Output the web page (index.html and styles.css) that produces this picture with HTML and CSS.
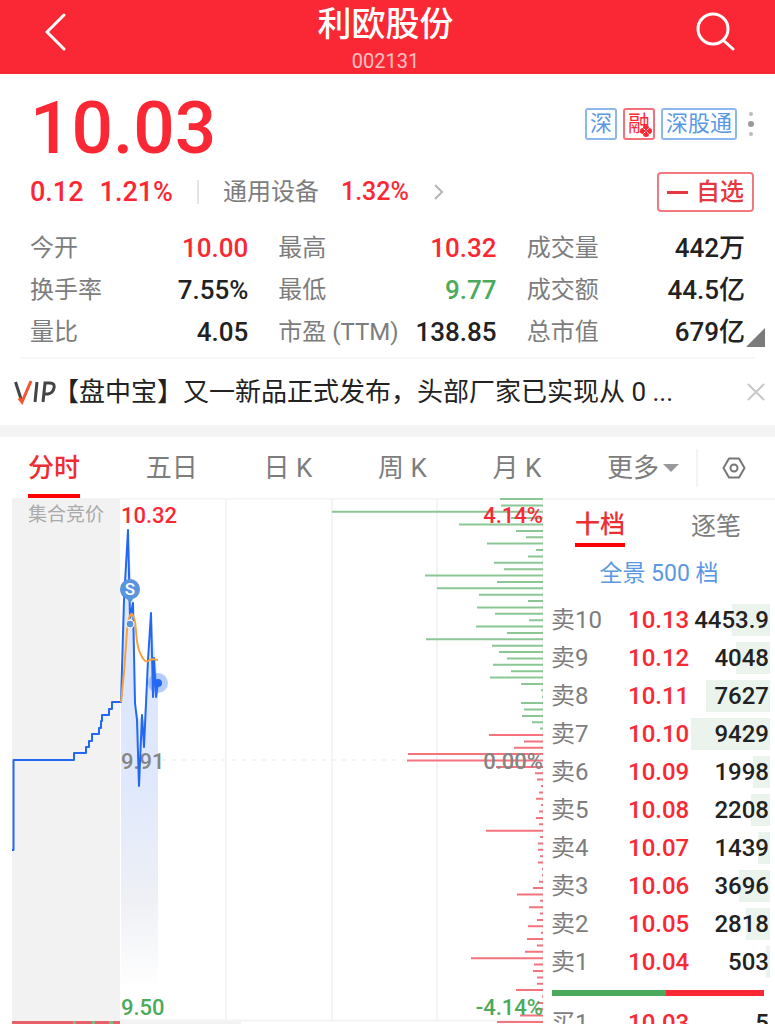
FILE: index.html
```
<!DOCTYPE html>
<html lang="zh-CN">
<head>
    <meta charset="UTF-8">
    <meta name="viewport" content="width=device-width, initial-scale=1.0">
    <title>利欧股份 002131</title>
    <link rel="stylesheet" href="styles.css">
</head>
<body>
    <div class="page">
        <header class="topbar">
            <button class="icon-btn" aria-label="返回">
                <svg width="24" height="40" viewBox="0 0 24 40"><path d="M20 3L3 20l17 17" fill="none" stroke="#fff" stroke-width="3" stroke-linecap="round" stroke-linejoin="round"/></svg>
            </button>
            <div class="title">
                <h1>利欧股份</h1>
                <p>002131</p>
            </div>
            <button class="icon-btn" aria-label="搜索">
                <svg width="40" height="40" viewBox="0 0 40 40"><g fill="none" stroke="#fff" stroke-width="3" stroke-linecap="round"><circle cx="18" cy="17" r="15"/><path d="M28.500 28.500L38 37"/></g></svg>
            </button>
        </header>

        <section class="quote">
            <div class="price-row">
                <strong class="price">10.03</strong>
                <div class="tags">
                    <span class="tag">深</span>
                    <span class="tag tag-red">融
                        <svg class="tag-badge" width="12" height="12" viewBox="0 0 12 12"><g fill="#fa2835"><circle cx="6" cy="3" r="3"/><circle cx="3" cy="6" r="3"/><circle cx="9" cy="6" r="3"/><circle cx="6" cy="9" r="3"/></g><path d="M3.500 3.500l5 5M8.500 3.500l-5 5" stroke="#fff"/><circle cx="6" cy="6" r="1" fill="#fa2835"/></svg>
                    </span>
                    <span class="tag">深股通</span>
                    <button class="more-dots" aria-label="更多标签"><svg width="8" height="26" viewBox="0 0 8 26"><circle cx="4" cy="3" r="2" fill="#bbb"/><circle cx="4" cy="13" r="3" fill="#999"/><circle cx="4" cy="23" r="2" fill="#bbb"/></svg></button>
                </div>
            </div>
            <div class="change-row">
                <span class="up">0.12</span>
                <span class="up">1.21%</span>
                <i class="sep"></i>
                <a href="#" class="sector">通用设备 <b class="up">1.32%</b>
                    <svg width="12" height="18" viewBox="0 0 12 18"><path d="M2 2l7 7-7 7" fill="none" stroke="#b5b5b5" stroke-width="2"/></svg>
                </a>
                <button class="watch"><i></i>自选</button>
            </div>
            <dl class="stats">
                <div><dt>今开</dt><dd class="up">10.00</dd></div>
                <div><dt>最高</dt><dd class="up">10.32</dd></div>
                <div><dt>成交量</dt><dd>442万</dd></div>
                <div><dt>换手率</dt><dd>7.55%</dd></div>
                <div><dt>最低</dt><dd class="down">9.77</dd></div>
                <div><dt>成交额</dt><dd>44.5亿</dd></div>
                <div><dt>量比</dt><dd>4.05</dd></div>
                <div><dt>市盈 (TTM)</dt><dd>138.85</dd></div>
                <div><dt>总市值</dt><dd>679亿</dd></div>
            </dl>
            <i class="corner"></i>
        </section>

        <div class="notice">
            <svg width="42" height="26" viewBox="0 0 42 26" role="img" aria-label="VIP"><g fill="none" stroke-width="3"><path d="M1.500 3l5.500 17" stroke="#444"/><path d="M17 2L8 23l-3-4" stroke="#f4552e"/><path d="M23 3l-2 20M29 23l2-19h5q5 0 4 5t-6 6h-4" stroke="#444"/></g></svg>
            <a href="#">【盘中宝】又一新品正式发布，头部厂家已实现从 0 ...</a>
            <button aria-label="关闭"><svg width="18" height="18" viewBox="0 0 18 18"><path d="M1 1l16 16M17 1L1 17" stroke="#c8c8c8" stroke-width="2"/></svg></button>
        </div>

        <nav class="tabs">
            <div class="tab-list">
                <button class="active">分时</button>
                <button>五日</button>
                <button>日 K</button>
                <button>周 K</button>
                <button>月 K</button>
                <button>更多<i class="caret"></i></button>
            </div>
            <button class="settings" aria-label="图表设置">
                <svg width="24" height="22" viewBox="0 0 24 22"><g fill="none" stroke="#777" stroke-width="2" stroke-linejoin="round"><path d="M7 1.500h10L22.500 11 17 20.500H7L1.500 11z"/><circle cx="12" cy="11" r="3.500"/></g></svg>
            </button>
        </nav>

        <main class="board">
            <svg class="chart" viewBox="0 0 531 526">
                <defs>
                    <linearGradient id="fade" x1="0" y1="0" x2="0" y2="1">
                        <stop offset="0" stop-color="#dbe6fd"/>
                        <stop offset=".55" stop-color="#dfe8fc"/>
                        <stop offset=".8" stop-color="#eef0f5"/>
                        <stop offset="1" stop-color="#fff"/>
                    </linearGradient>
                </defs>
                <rect width="108" height="523" fill="#f2f2f2"/>
                <rect x="108" y="522" width="121" height="4" fill="#f2f2f2"/>
                <path class="grid" d="M0 .5H531M108 522.500H531M214 0V522M320 0V522M425 0V522M531 0V522"/>
                <path class="grid" d="M150 262H395" stroke-dasharray="4 6"/>
                <path d="M0 524.500H108" stroke="#e8606a" stroke-width="3"/>
                <path d="M61 524.500h3M80 524.500h3M97 524.500h4" stroke="#7cbf86" stroke-width="3"/>
                <path class="area" d="M109 204L112 102 116 32 121 105 123 205 127 222 130 217 132 222 136 162 139 115 146 185V492H109z"/>
                <g id="depth"></g>
                <text class="hint" x="16" y="23">集合竞价</text>
                <text class="up" x="109" y="25">10.32</text>
                <text class="up" x="531" y="25" text-anchor="end">4.14%</text>
                <text class="flat" x="109" y="271">9.91</text>
                <text class="flat" x="531" y="271" text-anchor="end">0.00%</text>
                <text class="down" x="109" y="517">9.50</text>
                <text class="down" x="531" y="517" text-anchor="end">-4.14%</text>
                <path class="line" d="M0 352h1.500V262H62v-7h12v-6h3v-6h3v-7h7v-6h2v-7h1v-6h7v-6h3v-7h9L112 102 116 32 118 120 121 105 123 205 125 222 127 288 130 217 132 249 136 162 139 115 141 199 142 160 144 199 146 185"/>
                <path class="average" d="M109 204L112 175 115 132Q117 115 120 116 123 118 124 133 125 150 129 157 133 165 136 163 139 160 146 162"/>
                <circle cx="146" cy="185" r="10" fill="#2f6ff5" opacity=".35"/>
                <circle cx="146" cy="185" r="4" fill="#2468f2"/>
                <path d="M108 91a10 10 0 1 1 20 0c0 6-4 9-7 10l-3 4-3-4c-3-1-7-4-7-10z" fill="#5a94df"/>
                <text class="pin" x="118" y="97" text-anchor="middle">S</text>
                <circle cx="118" cy="126" r="4" fill="#5a94df" stroke="#fff"/>
            </svg>

            <aside class="book">
                <div class="book-tabs">
                    <button class="active">十档</button>
                    <button>逐笔</button>
                </div>
                <a href="#" class="panorama">全景 500 档</a>
                <table>
                    <tr><th>卖10</th><td>10.13</td><td><i style="width:38px"></i><span>4453.9</span></td></tr>
                    <tr><th>卖9</th><td>10.12</td><td><i style="width:34px"></i><span>4048</span></td></tr>
                    <tr><th>卖8</th><td>10.11</td><td><i style="width:64px"></i><span>7627</span></td></tr>
                    <tr><th>卖7</th><td>10.10</td><td><i style="width:79px"></i><span>9429</span></td></tr>
                    <tr><th>卖6</th><td>10.09</td><td><i style="width:17px"></i><span>1998</span></td></tr>
                    <tr><th>卖5</th><td>10.08</td><td><i style="width:19px"></i><span>2208</span></td></tr>
                    <tr><th>卖4</th><td>10.07</td><td><i style="width:12px"></i><span>1439</span></td></tr>
                    <tr><th>卖3</th><td>10.06</td><td><i style="width:31px"></i><span>3696</span></td></tr>
                    <tr><th>卖2</th><td>10.05</td><td><i style="width:24px"></i><span>2818</span></td></tr>
                    <tr><th>卖1</th><td>10.04</td><td><i style="width:4px"></i><span>503</span></td></tr>
                </table>
                <div class="ratio"><i style="width:54%"></i></div>
                <table>
                    <tr><th>买1</th><td>10.03</td><td><span>5</span></td></tr>
                </table>
            </aside>
        </main>
    </div>

    <script>
        // volume at each price level, top to bottom
        const sell = [43,42,211,32,84,27,17,56,7,15,49,39,118,46,106,64,15,66,48,14,67,36,117,51,44,36,50,32,53,22,2,1,22,19,21,11,3];
        const buy = [54,19,29,135,136,47,8,6,2,4,7,2,4,7,4,57,3,5,5,3,5,1,1,4,10,26,3,14,3,6,15,2,16,6,18,72,9,10,6,6,27,1,5,8,23,46];
        const step = 523 / 82;

        function bars(list, start, cls) {
            const d = list.map((w, i) => `M531 ${(1 + (start + i) * step).toFixed(1)}h-${w}`).join('');
            return `<path class="${cls}" d="${d}"/>`;
        }

        document.getElementById('depth').innerHTML =
            bars(sell, 0, 'sell') + bars(buy, sell.length, 'buy');
    </script>
</body>
</html>
```
FILE: styles.css
```
:root {
    --red: #fa2835;
    --green: #4caa5c;
    --blue: #5a98e4;
    --gray: #7d7d7d;
    --text: #222;
    --line: #f4f4f4;
}
* { box-sizing: border-box; margin: 0; padding: 0; }
body {
    font-family: Roboto, "Noto Sans CJK SC", sans-serif;
    font-size: 24px; color: var(--text); background: #fff;
}
button { background: none; border: none; font: inherit; color: inherit; cursor: pointer; }
a { color: inherit; text-decoration: none; }
i { font-style: normal; }
svg { display: block; }
.page { height: 100vh; overflow: hidden; }
.up { color: var(--red); fill: var(--red); }
.down { color: var(--green); fill: var(--green); }

.topbar {
    display: flex; justify-content: space-between; align-items: flex-start;
    height: 74px; padding: 12px 40px 0 36px;
    background: var(--red); color: #fff;
}
.icon-btn { width: 40px; }
.icon-btn:first-child { padding-left: 8px; }
.title { text-align: center; margin-top: -12px; }
.title h1 { font-size: 34px; line-height: 48px; font-weight: 500; }
.title p { font-size: 20px; line-height: 26px; opacity: .7; }

.quote { position: relative; padding: 14px 30px 0; }
.price-row { display: flex; justify-content: space-between; height: 80px; }
.price { font-size: 73px; line-height: 80px; font-weight: 500; color: var(--red); }
.tags { display: flex; gap: 6px; margin: 20px -10px 0 0; height: 32px; }
.tag {
    position: relative; border: 2px solid #8db8ee; border-radius: 3px;
    padding: 0 3px; font-size: 22px; line-height: 28px; color: var(--blue);
}
.tag-red { border-color: #f3707a; color: var(--red); }
.tag-badge { position: absolute; right: 1px; bottom: 1px; }
.more-dots { margin-left: 4px; }
.change-row {
    display: flex; align-items: center; height: 40px; margin: 4px -9px 0 0;
    font-size: 27px; font-weight: 500;
}
.change-row > .up + .up { margin-left: 16px; }
.sep { width: 2px; height: 24px; margin: 0 24px; background: #e4e4e4; }
.sector { display: flex; align-items: center; line-height: 36px; color: var(--gray); font-size: 24px; font-weight: 400; }
.sector b { font-size: 25px; font-weight: 500; margin: 0 24px 0 22px; }
.watch {
    display: flex; align-items: center; gap: 8px; margin-left: auto;
    height: 40px; padding: 0 8px; border: 2px solid #f07a80; border-radius: 4px;
    color: #e5393f; font-size: 24px; font-weight: 500; line-height: 36px;
}
.watch i { width: 21px; height: 3px; background: #e5393f; }
.stats {
    display: grid; grid-template-columns: repeat(3, 1fr); column-gap: 30px;
    margin: 15px 0 0; padding-bottom: 4px;
}
.stats div { display: flex; justify-content: space-between; line-height: 42px; white-space: nowrap; }
.stats dt { color: var(--gray); }
.stats dd { font-size: 26px; font-weight: 500; }
.corner {
    position: absolute; right: 10px; bottom: 10px;
    border-left: 19px solid transparent; border-bottom: 19px solid #7b7b7b;
}

.notice {
    display: flex; align-items: center; height: 68px; margin: 0 20px; border-top: 2px solid #f6f6f6;
}
.notice svg { flex: none; }
.notice > svg { margin-left: -6px; }
.notice a { flex: 1; font-size: 26px; line-height: 36px; overflow: hidden; white-space: nowrap; margin-left: -3px; }
.notice button { margin-right: -10px; }

.tabs { display: flex; align-items: center; height: 73px; border-top: 12px solid #f4f4f4; }
.tab-list { flex: 1; display: flex; justify-content: space-between; padding: 0 17px 0 28px; border-right: 2px solid var(--line); }
.tab-list button { font-size: 26px; line-height: 38px; color: var(--gray); }
.tab-list .active { color: #ee2d33; font-weight: 500; box-shadow: 0 7px #fff, 0 11px #f00; }
.caret {
    display: inline-block; vertical-align: middle; margin: 0 0 4px 4px;
    border: 8px solid transparent; border-top-color: #999; border-bottom: 0;
}
.settings { padding: 0 29px 0 24px; }

.board { display: grid; grid-template-columns: 1fr 232px; padding-left: 12px; }
.chart { width: 100%; height: auto; font-size: 22px; font-weight: 500; }
.chart .grid { stroke: var(--line); stroke-width: 2; }
.chart .area { fill: url(#fade); }
.chart .hint { font-size: 19px; font-weight: 400; fill: #aaa; }
.chart .flat { fill: #858585; }
.chart .line { fill: none; stroke: #2468f2; stroke-width: 2; stroke-linejoin: round; }
.chart .average { fill: none; stroke: #f9a23c; stroke-width: 2; }
.chart .pin { font-size: 17px; fill: #fff; }
.chart .sell { stroke: #8bc795; stroke-width: 2; }
.chart .buy { stroke: #f5737e; stroke-width: 2; }

.book { border-top: 2px solid var(--line); }
.book-tabs { display: flex; justify-content: space-between; padding: 7px 34px 0 32px; }
.book-tabs button { font-size: 25px; line-height: 36px; color: var(--gray); }
.book-tabs .active { color: #ee2d33; font-weight: 500; border-bottom: 4px solid #f00; }
.panorama { display: block; text-align: center; line-height: 34px; margin: 10px 0; font-size: 23px; color: var(--blue); }
.book table { width: 100%; border-collapse: collapse; table-layout: fixed; }
.book tr { height: 38px; }
.book th { width: 78px; padding: 0 0 0 8px; text-align: left; line-height: 32px; font-weight: 400; color: var(--gray); }
.book td { font-weight: 500; color: var(--red); padding-left: 7px; line-height: 32px; }
.book td:last-child { position: relative; width: 84px; padding: 0 6px 0 0; text-align: right; color: var(--text); }
.book td i { position: absolute; right: 5px; top: 3px; height: 32px; background: #eaf4ed; }
.book td span { position: relative; }
.ratio { height: 6px; margin: 9px 11px 8px 9px; background: var(--red); }
.ratio i { display: block; height: 100%; background: var(--green); }
```
